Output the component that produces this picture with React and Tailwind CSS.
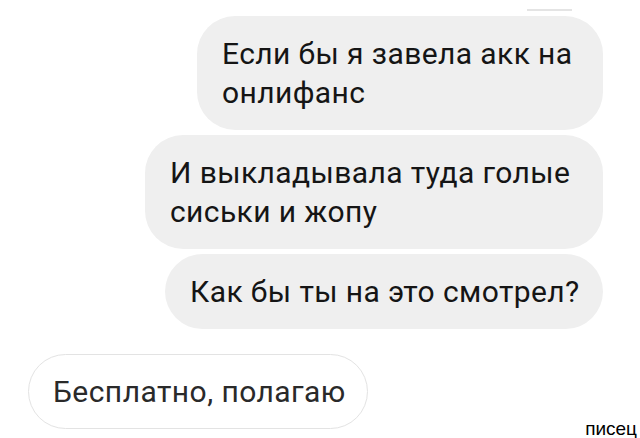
const messages = [
  { id: 1, text: "Если бы я завела акк на онлифанс", width: "w-[406px]" },
  { id: 2, text: "И выкладывала туда голые сиськи и жопу", width: "w-[458px]" },
  { id: 3, text: "Как бы ты на это смотрел?", width: "w-[438px]" },
];

function OutBubble({ text, width }) {
  return (
    <div
      className={`${width} mt-[5px] self-end rounded-[38px] bg-[#efefef] pl-[25px] pr-[18px] pt-[18px] pb-[18px] text-[30px] leading-[39px] tracking-[0.4px] text-[#151515]`}
    >
      {text}
    </div>
  );
}

export default function App() {
  return (
    <div
      className="relative w-[640px] h-[438px] overflow-hidden bg-white"
      style={{ fontFamily: "Roboto, 'Noto Sans', sans-serif" }}
    >
      <div className="flex flex-col pr-[37px]">
        <div className="mt-[9px] mr-[31px] h-[2px] w-[45px] self-end bg-[#e4e4e4]" />
        {messages.map((m) => (
          <OutBubble key={m.id} text={m.text} width={m.width} />
        ))}
        <div className="mt-[25px] ml-[28px] w-[340px] self-start rounded-[38px] border border-[#e3e3e3] bg-white pl-[24px] pt-[17px] pb-[17px] text-[30px] leading-[39px] tracking-[0.45px] text-[#2a2a2a]">
          Бесплатно, полагаю
        </div>
      </div>
      <div className="absolute right-[3px] bottom-[-2px] text-[19px] leading-[22px] text-black font-['Liberation_Sans',Arial,sans-serif]">
        писец
      </div>
    </div>
  );
}
